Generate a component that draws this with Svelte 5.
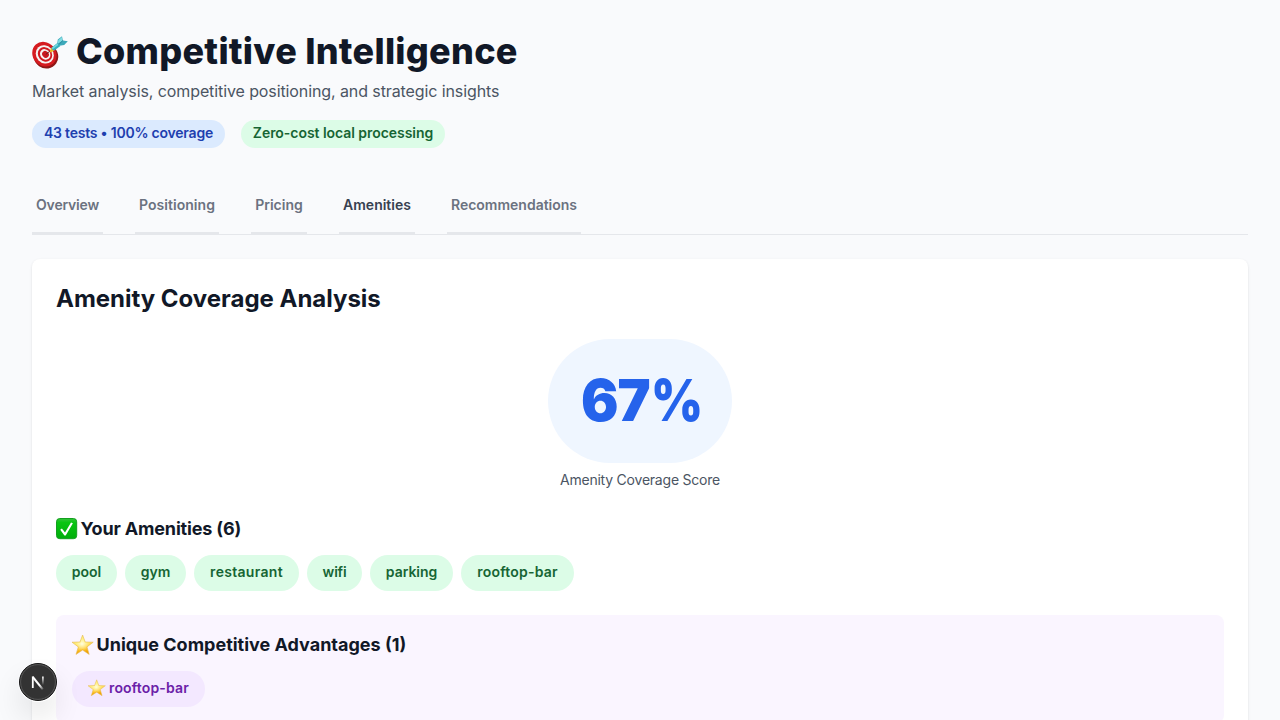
<script>
  const tabs = [
    { label: 'Overview', width: 71, track: -0.2 },
    { label: 'Positioning', width: 84, track: 0.04 },
    { label: 'Pricing', width: 56, track: 0 },
    { label: 'Amenities', width: 76, track: 0, active: true },
    { label: 'Recommendations', width: 134, track: 0 }
  ];
  const amenities = [
    { label: 'pool', width: 61, track: 0 },
    { label: 'gym', width: 61, track: -0.1 },
    { label: 'restaurant', width: 105, track: 0.3 },
    { label: 'wifi', width: 55, track: -0.2 },
    { label: 'parking', width: 83, track: -0.05 },
    { label: 'rooftop-bar', width: 113, track: 0.2 }
  ];
</script>

{#snippet star(cls)}
  <svg class={cls} viewBox="0 0 22 22" aria-hidden="true">
    <defs>
      <linearGradient id="gold" x1="0" y1="0" x2="0.2" y2="1">
        <stop offset="0" stop-color="#fff06a" />
        <stop offset="0.48" stop-color="#ffe867" />
        <stop offset="0.75" stop-color="#ffc62c" />
        <stop offset="1" stop-color="#f0a000" />
      </linearGradient>
      <radialGradient id="shine" cx="0.47" cy="0.46" r="0.45">
        <stop offset="0" stop-color="#fffde0" />
        <stop offset="1" stop-color="#fff9b0" stop-opacity="0" />
      </radialGradient>
    </defs>
    <path d="M10.6 1 13.2 8 21.2 8.2 15 12.9 17.2 20.4 10.6 16.1 4 20.4 6.3 12.9 0 8.2 8 8Z" fill="url(#gold)" stroke="#e4b956" stroke-width=".6" stroke-linejoin="round" />
    <path d="M10.6 2 12.8 8.5 19.8 8.8 14.4 13 16.3 19 10.6 15.2 5 19 6.9 13 1.4 8.8 8.4 8.5Z" fill="url(#shine)" />
  </svg>
{/snippet}

<main>
  <header>
    <h1>
      <svg class="target" viewBox="0 0 36 36" aria-hidden="true">
        <ellipse cx="14" cy="21.4" rx="12.4" ry="12" transform="rotate(35 14 21.4)" fill="#8e1716" />
        <ellipse cx="12.4" cy="19.2" rx="12.9" ry="11.6" transform="rotate(48 12.4 19.2)" fill="#d51b20" />
        <ellipse cx="12.8" cy="19.4" rx="9.6" ry="8.6" transform="rotate(48 12.8 19.4)" fill="#f5f3f2" />
        <ellipse cx="13" cy="19.4" rx="7.7" ry="6.8" transform="rotate(48 13 19.4)" fill="#cf1a20" />
        <ellipse cx="13.2" cy="19.4" rx="5.6" ry="4.9" transform="rotate(48 13.2 19.4)" fill="#f7f3f2" />
        <ellipse cx="13.5" cy="19.4" rx="3.6" ry="3.1" transform="rotate(48 13.5 19.4)" fill="#c81920" />
        <path d="m13.8 19.4 5-4" stroke="#651c1c" stroke-width="1" />
        <path d="m17.6 16.4 1.8-3.6 3 2.7-3.8 1.9Z" fill="#edb51d" />
        <path d="m19.4 12.7 6-4.7 3 3-6.1 4.5Q20 15.4 19.4 12.7Z" fill="#36afbd" />
        <path d="m19.8 12.7 6-4.7 1.2 1.4-6.4 4.9Z" fill="#70d7df" />
        <path d="m25.2 8.6.6-4L30 1.2l.8 4.2 5 .8-3.6 3.7-4.8.9Z" fill="#3da9ba" />
        <path d="m25.7 8.4.7-3.5L29.9 2l.3 4Z" fill="#80dce2" />
        <path d="m27 9.4 3.8-4" stroke="#247f93" stroke-width=".8" />
      </svg>
      <span>Competitive Intelligence</span>
    </h1>
    <p class="subtitle">Market analysis, competitive positioning, and strategic insights</p>
    <div class="badges">
      <span class="badge blue">43 tests • 100% coverage</span>
      <span class="badge green">Zero-cost local processing</span>
    </div>
  </header>

  <nav>
    {#each tabs as tab}
      <button class:active={tab.active} style="width:{tab.width}px;letter-spacing:{tab.track}px">{tab.label}</button>
    {/each}
  </nav>

  <section class="card">
    <h2>Amenity Coverage Analysis</h2>
    <div class="score">
      <div class="bubble"><span class="digits">67</span><span class="percent">%</span></div>
      <p>Amenity Coverage Score</p>
    </div>

    <h3>
      <svg class="emoji" viewBox="0 0 22 22" aria-hidden="true">
        <defs>
          <linearGradient id="leaf" x1="0" y1="0" x2="0" y2="1">
            <stop offset="0" stop-color="#35c33b" />
            <stop offset="0.2" stop-color="#08c512" />
            <stop offset="1" stop-color="#00ad0b" />
          </linearGradient>
        </defs>
        <rect x=".5" y=".5" width="20.2" height="20.2" rx="3.3" fill="url(#leaf)" stroke="#149f20" />
        <path d="m4.2 11.8 1.7-1.2 3.1 3.9 6-10 1.9.7-7.2 12.3H8.4Z" fill="#fff" />
      </svg>
      <span class="own">Your Amenities (6)</span>
    </h3>
    <div class="chips">
      {#each amenities as item}
        <span class="chip green" style="width:{item.width}px;letter-spacing:{item.track}px">{item.label}</span>
      {/each}
    </div>

    <div class="unique">
      <h3>{@render star('emoji')}<span class="adv">Unique Competitive Advantages (1)</span></h3>
      <div class="chips">
        <span class="chip purple">{@render star('small')}rooftop-bar</span>
      </div>
    </div>
  </section>
</main>

<div class="dev">
  <svg viewBox="0 0 40 40" aria-hidden="true">
    <defs>
      <linearGradient id="diag" gradientUnits="userSpaceOnUse" x1="20" y1="20" x2="26" y2="28">
        <stop offset="0.35" stop-color="#fff" />
        <stop offset="1" stop-color="#fff" stop-opacity="0" />
      </linearGradient>
      <linearGradient id="stem" gradientUnits="userSpaceOnUse" x1="0" y1="14" x2="0" y2="23">
        <stop offset="0.1" stop-color="#fff" />
        <stop offset="1" stop-color="#fff" stop-opacity="0" />
      </linearGradient>
    </defs>
    <circle cx="20" cy="20" r="18.5" fill="#333" stroke="#161616" />
    <circle cx="20" cy="20" r="17.4" fill="none" stroke="#555" />
    <path d="M14.8 15 24.8 27.4" fill="none" stroke="url(#diag)" stroke-width="2" />
    <path d="M14.8 26V14.4" stroke="#fff" stroke-width="1.8" />
    <path d="M24.9 14.4V23" stroke="url(#stem)" stroke-width="1.6" />
  </svg>
</div>

<style>
  :global(body) { background: #f9fafb; overflow: hidden; }
  :global(#app) { height: 720px; overflow: hidden; }
  main { padding: 32px; color: #111827; font-family: Inter, sans-serif; background: #f9fafc; white-space: nowrap; }
  h1, h2, h3, p { margin: 0; }
  h1 { display: flex; align-items: center; gap: 8px; height: 40px; font-size: 36px; line-height: 38px; font-weight: 800; letter-spacing: 0.27px; }
  h1 span { padding-bottom: 2px; }
  .target { width: 36px; height: 36px; margin-top: 1px; }
  .subtitle { height: 24px; margin-top: 8px; font-size: 16px; line-height: 22px; color: #4b5563; letter-spacing: -0.1px; }
  .badges { display: flex; gap: 16px; margin-top: 16px; }
  .badge { box-sizing: border-box; height: 28px; padding: 3px 0; border-radius: 14px; text-align: center; font-size: 14px; line-height: 20px; font-weight: 600; }
  .badge.blue { width: 193px; background: #dbeafe; color: #1e40af; letter-spacing: -0.22px; }
  .badge.green { width: 204px; letter-spacing: -0.05px; }
  .green { background: #dcfce7; color: #166534; }
  nav { display: flex; gap: 32px; margin-top: 32px; height: 54px; border-bottom: 1px solid #e5e7eb; }
  button { box-sizing: border-box; height: 55px; padding: 0 0 3px; border: 0; border-bottom: 3px solid #e5e7eb; background: none; color: #6b7280; font: 600 14px/20px Inter, sans-serif; }
  button.active { color: #374151; }
  .card { margin-top: 24px; padding: 24px; border-radius: 8px; background: #fff; box-shadow: 0 1px 3px #0000001a, 0 1px 2px -1px #0000001a; }
  h2 { font-size: 24px; line-height: 32px; font-weight: 700; letter-spacing: -0.02px; }
  .score { display: flex; flex-direction: column; align-items: center; margin-top: 24px; }
  .bubble { display: flex; align-items: center; justify-content: center; width: 184px; height: 124px; border-radius: 62px; background: #eff6ff; color: #2563eb; font-size: 58px; line-height: 60px; font-weight: 900; }
  .bubble span { padding-bottom: 2px; }
  .digits { width: 70px; letter-spacing: -1px; transform: scaleX(0.96); transform-origin: left; font-kerning: none; }
  .percent { width: 48px; transform: scaleX(0.86); transform-origin: left; }
  .score p { margin-top: 7px; font-size: 14px; line-height: 20px; color: #4b5563; letter-spacing: -0.22px; }
  h3 { display: flex; align-items: center; gap: 2.5px; font-size: 18px; line-height: 28px; font-weight: 650; }
  .score + h3 { margin-top: 25px; }
  .emoji { width: 22px; height: 22px; }
  .own { letter-spacing: -0.16px; }
  .adv { letter-spacing: 0; }
  .chips { display: flex; gap: 8px; margin-top: 12px; }
  .chip { display: flex; align-items: center; justify-content: center; box-sizing: border-box; height: 36px; padding-bottom: 2px; border-radius: 18px; font-size: 14px; line-height: 20px; font-weight: 600; }
  .unique { margin-top: 24px; padding: 16px; border-radius: 8px; background: #faf5ff; }
  .purple { width: 133px; gap: 3px; background: #f3e8ff; color: #6b21a8; letter-spacing: 0.15px; }
  .small { width: 18px; height: 18px; }
  .dev { position: fixed; left: 18px; top: 662px; width: 40px; height: 40px; border-radius: 50%; box-shadow: 0 16px 32px -8px #0000003d; }
  .dev svg { display: block; }
</style>
